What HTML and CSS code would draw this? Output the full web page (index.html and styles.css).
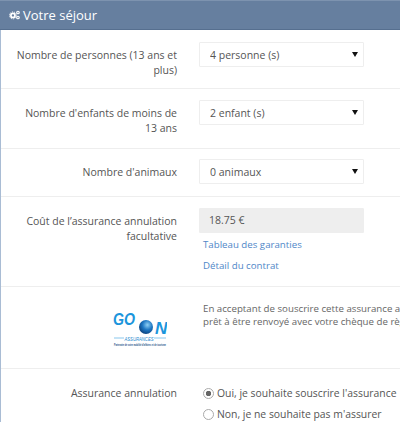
FILE: index.html
```html
<!DOCTYPE html>
<html lang="fr">
<head>
    <meta charset="UTF-8">
    <meta name="viewport" content="width=device-width, initial-scale=1.0">
    <title>Votre séjour</title>
    <link rel="stylesheet" href="styles.css">
</head>
<body>
<div class="panel">
    <div class="panel-heading">
        <svg class="cogs" viewBox="0 0 14 12" width="11" height="10">
            <circle cx="5" cy="6.5" r="2.6" fill="none" stroke="#fff" stroke-width="2.2"></circle>
            <circle cx="5" cy="6.5" r="4.4" fill="none" stroke="#fff" stroke-width="1.2" stroke-dasharray="1.5 1.2"></circle>
            <circle cx="11.4" cy="2.8" r="1.6" fill="none" stroke="#fff" stroke-width="1.5"></circle>
            <circle cx="11.4" cy="9.2" r="1.6" fill="none" stroke="#fff" stroke-width="1.5"></circle>
        </svg>
        <span>Votre séjour</span>
    </div>

    <div class="row row-persons">
        <label class="row-label">Nombre de personnes (13 ans et plus)</label>
        <div class="select-wrap">
            <select class="field"><option>4 personne (s)</option></select>
        </div>
    </div>

    <div class="row row-children">
        <label class="row-label">Nombre d'enfants de moins de 13 ans</label>
        <div class="select-wrap">
            <select class="field"><option>2 enfant (s)</option></select>
        </div>
    </div>

    <div class="row row-animals">
        <label class="row-label">Nombre d'animaux</label>
        <div class="select-wrap">
            <select class="field"><option>0 animaux</option></select>
        </div>
    </div>

    <div class="row row-cost">
        <label class="row-label">Coût de l’assurance annulation facultative</label>
        <div>
            <div class="field field-readonly">18.75 €</div>
            <a class="doc-link" href="#">Tableau des garanties</a>
            <a class="doc-link" href="#">Détail du contrat</a>
        </div>
    </div>

    <div class="row row-info">
        <div class="logo">
            <svg viewBox="0 0 54 36" width="54" height="36">
                <defs>
                    <radialGradient id="globe" cx="0.6" cy="0.35" r="0.7">
                        <stop offset="0" stop-color="#8fd0f5"></stop>
                        <stop offset="0.5" stop-color="#1f78c4"></stop>
                        <stop offset="1" stop-color="#0b3f7a"></stop>
                    </radialGradient>
                </defs>
                <text x="0" y="14" class="logo-go" textLength="22" lengthAdjust="spacingAndGlyphs">GO</text>
                <circle cx="33" cy="16" r="7" fill="url(#globe)"></circle>
                <text x="42" y="23" class="logo-go">N</text>
                <path d="M1 27H11M41 27H53" stroke="#3aa3e0" stroke-width="0.6"></path>
                <text x="26" y="29.5" class="logo-sub" textLength="29" lengthAdjust="spacingAndGlyphs">ASSURANCES</text>
                <text x="27" y="34.5" class="logo-tiny" textLength="52" lengthAdjust="spacingAndGlyphs">Partenaire de votre mobilité d'affaires et de tourisme</text>
            </svg>
        </div>
        <p class="info-text">En acceptant de souscrire cette assurance a<br>prêt à être renvoyé avec votre chèque de règ</p>
    </div>

    <div class="row row-choice">
        <label class="row-label row-label-flat">Assurance annulation</label>
        <div class="radio-list">
            <label class="radio-item"><input type="radio" name="assurance" checked><span>Oui, je souhaite souscrire l'assurance</span></label>
            <label class="radio-item"><input type="radio" name="assurance"><span>Non, je ne souhaite pas m'assurer</span></label>
        </div>
    </div>
</div>
</body>
</html>
```

FILE: styles.css
```css
html,
body {
    margin: 0;
    height: 100%;
    overflow: hidden;
    background-color: white;
}

body {
    font-family: "Open Sans", sans-serif;
    font-size: 10.5px;
    line-height: 15px;
    color: #555;
}

.panel {
    border-left: 1px solid #a9bcd4;
}

.panel-heading {
    display: flex;
    align-items: center;
    gap: 3px;
    box-sizing: border-box;
    height: 30px;
    margin-left: -1px;
    padding-left: 9px;
    background-color: #667f9f;
    border-top: 1px solid #7d93af;
    border-bottom: 1px solid #566f8f;
    color: white;
    font-size: 13px;
}

.row {
    display: grid;
    grid-template-columns: 176px 165px;
    column-gap: 22px;
    box-sizing: border-box;
    border-bottom: 1px solid #eee;
}

.row-persons {
    height: 59px;
    padding-top: 12px;
}

.row-children {
    height: 60px;
    padding-top: 11px;
}

.row-animals {
    height: 48px;
    padding-top: 10px;
}

.row-cost {
    height: 90px;
    padding-top: 11px;
}

.row-info {
    height: 82px;
    padding-top: 15px;
}

.row-choice {
    padding-top: 17px;
    border-bottom: none;
}

.row-label {
    text-align: right;
    padding: 6px 0 0 12px;
}

.row-label-flat {
    padding-top: 0;
}

.select-wrap {
    position: relative;
    height: 25px;
}

.select-wrap::after {
    content: "";
    position: absolute;
    right: 6px;
    top: 10px;
    border-left: 3px solid transparent;
    border-right: 3px solid transparent;
    border-top: 5px solid #111;
}

.field {
    display: block;
    box-sizing: border-box;
    width: 165px;
    height: 25px;
    padding: 0 10px;
    border: 1px solid #eee;
    border-radius: 1px;
    background-color: white;
    font-family: inherit;
    font-size: 10.5px;
    color: #555;
    appearance: none;
}

.field-readonly {
    background-color: #eee;
    line-height: 23px;
    padding: 0 9px;
}

.doc-link {
    display: block;
    margin: 4px 0 0 4px;
    color: #5087c8;
    font-size: 9.7px;
    text-decoration: none;
}

.doc-link + .doc-link {
    margin-top: 6px;
}

.logo {
    display: flex;
    justify-content: flex-end;
    padding: 9px 10px 0 0;
}

.logo-go {
    font-family: "Liberation Sans", sans-serif;
    font-size: 17px;
    font-weight: bold;
    font-style: italic;
    fill: #1b95dc;
}

.logo-sub {
    font-family: "Liberation Sans", sans-serif;
    font-size: 5px;
    font-style: italic;
    fill: #2a8ccf;
    text-anchor: middle;
}

.logo-tiny {
    font-family: "Liberation Sans", sans-serif;
    font-size: 2.6px;
    font-weight: bold;
    fill: #1c4f86;
    text-anchor: middle;
}

.info-text {
    margin: 0 0 0 4px;
    width: 197px;
    font-size: 9.7px;
    line-height: 13px;
    white-space: nowrap;
    overflow: hidden;
    color: #666;
}

.radio-list {
    display: flex;
    flex-direction: column;
    gap: 6px;
    width: 200px;
    font-size: 10.4px;
}

.radio-item {
    display: flex;
    align-items: center;
    gap: 3px;
    height: 15px;
    white-space: nowrap;
}

.radio-item input {
    appearance: none;
    box-sizing: border-box;
    margin: 0 0 0 4px;
    width: 11px;
    height: 11px;
    border: 1px solid #aaa;
    border-radius: 50%;
    background-color: white;
}

.radio-item input:checked {
    background: radial-gradient(circle, #666 0 2.5px, white 3px);
}
```
